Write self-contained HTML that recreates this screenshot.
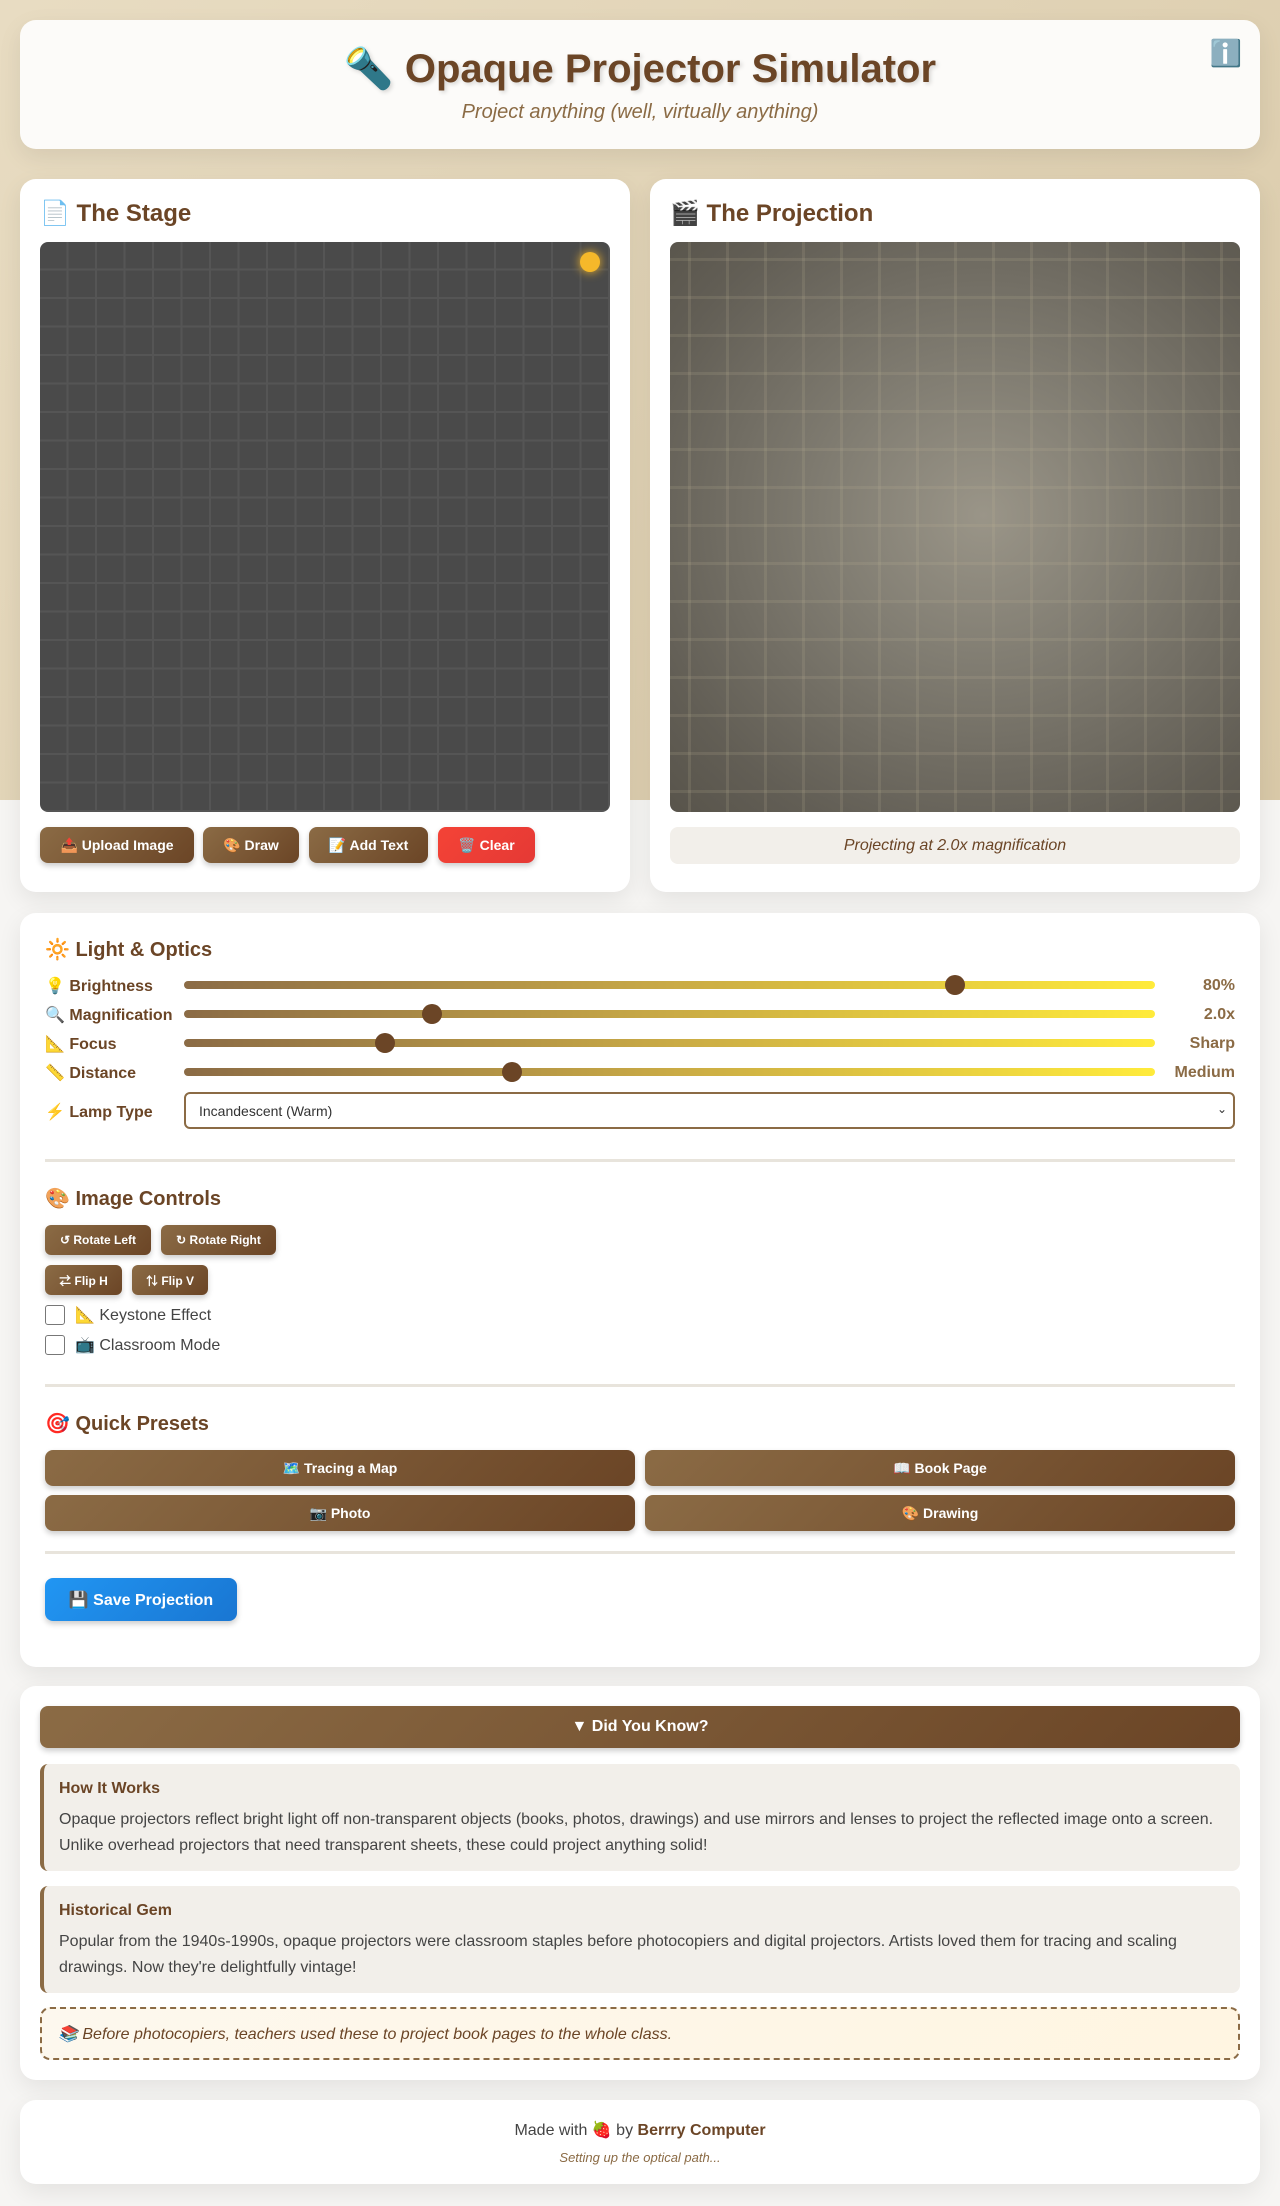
<!DOCTYPE html>
<html><head><meta charset="utf-8">
<style>
*{box-sizing:border-box;margin:0;padding:0}
html{background:#f6f5f3}
body{width:1280px;height:2206px;font-family:"Liberation Sans","Noto Sans CJK SC",sans-serif;color:#333;position:relative;
background:linear-gradient(135deg,#e8dcc2 0%,#d9c9a8 100%) no-repeat;background-size:1280px 800px;}
.card{position:absolute;background:#fff;border-radius:16px;box-shadow:0 8px 24px rgba(0,0,0,.08)}
.hdr{left:20px;top:20px;width:1240px;height:129px;background:#fcfbf9;text-align:center}
.hdr h1{position:absolute;left:0;right:0;top:25px;font-size:40px;color:#6b4526;text-shadow:2px 2px 4px rgba(0,0,0,.15)}
.hdr p{position:absolute;left:0;right:0;top:81px;font-size:20px;font-style:italic;color:#8b6b45}
.info{position:absolute;right:18px;top:18px;font-size:26px}
h2{font-size:24px;color:#6b4526;font-weight:bold}
h3{font-size:20px;color:#6b4526;font-weight:bold}
.stage{position:absolute;left:20px;top:63px;border-radius:8px;width:570px;height:570px;background-color:#4a4a4a;
background-image:linear-gradient(to right,transparent 26.5px,#555 26.5px,#555 28.5px),linear-gradient(to bottom,transparent 26.5px,#555 26.5px,#555 28.5px);background-size:28.5px 28.5px}
.proj{position:absolute;left:20px;top:63px;border-radius:8px;width:570px;height:570px;overflow:hidden;
background:radial-gradient(ellipse at 55% 48%,#9a9588 0%,#817d72 35%,#625e55 80%,#58544b 100%)}
.proj:after{content:"";position:absolute;inset:0;background-image:linear-gradient(to right,transparent 18px,rgba(190,180,150,.16) 18px,rgba(190,180,150,.16) 21px,transparent 21px),linear-gradient(to bottom,transparent 16px,rgba(190,180,150,.16) 16px,rgba(190,180,150,.16) 19px,transparent 19px);background-size:38px 38px}
.btn{position:absolute;height:36px;border-radius:8px;background:linear-gradient(135deg,#8b6b45,#6b4526);color:#fff;font-weight:bold;font-size:14px;display:flex;align-items:center;justify-content:center;box-shadow:0 3px 6px rgba(0,0,0,.2)}
.sm{height:30px;font-size:12px;border-radius:6px}
.row{position:absolute;left:45px;width:1190px;height:24px}
.row .l{position:absolute;left:0;top:3px;font-size:16px;font-weight:bold;color:#6b4526}
.row .t{position:absolute;left:139px;width:971px;top:8px;height:8px;border-radius:4px;background:linear-gradient(to right,#8b6b45,#c9aa45 50%,#ffeb3b)}
.row .k{position:absolute;top:2px;width:20px;height:20px;border-radius:50%;background:#6b4526;margin-left:-10px}
.row .v{position:absolute;right:0;top:4px;font-size:16px;font-weight:bold;color:#8b6b45}
.div{position:absolute;left:45px;width:1190px;height:3px;background:#e8e4dc}
.cb{position:absolute;left:45px;font-size:16px;color:#444;display:flex;align-items:center}
.cb i{display:inline-block;width:20px;height:20px;border:1.5px solid #777;border-radius:3px;margin-right:10px}
.fact{position:absolute;left:40px;width:1200px;background:#f2efea;border-left:4px solid #8b6b45;border-radius:8px;padding:16px 15px}
.fact b{display:block;color:#6b4526;font-size:16px;margin-bottom:9px}
.fact p{font-size:16px;line-height:26px;color:#444}
</style></head><body>
<div class="card hdr"><h1>🔦 Opaque Projector Simulator</h1><p>Project anything (well, virtually anything)</p><div class="info">ℹ️</div></div>

<div class="card" style="left:20px;top:179px;width:610px;height:713px">
<h2 style="position:absolute;left:20px;top:20px">📄 The Stage</h2>
<div class="stage"><div style="position:absolute;right:10px;top:10px;width:20px;height:20px;border-radius:50%;background:#f5b82a;box-shadow:0 0 10px #f5b82a"></div></div>
<div class="btn" style="left:20px;top:648px;width:154px">📤 Upload Image</div>
<div class="btn" style="left:183px;top:648px;width:96px">🎨 Draw</div>
<div class="btn" style="left:289px;top:648px;width:119px">📝 Add Text</div>
<div class="btn" style="left:418px;top:648px;width:97px;background:linear-gradient(135deg,#f44336,#e53935)">🗑️ Clear</div>
</div>

<div class="card" style="left:650px;top:179px;width:610px;height:713px">
<h2 style="position:absolute;left:20px;top:20px">🎬 The Projection</h2>
<div class="proj"></div>
<div style="position:absolute;left:20px;top:648px;width:570px;height:37px;background:#f2efea;border-radius:8px;text-align:center;line-height:37px;font-style:italic;font-size:16px;color:#6b4526">Projecting at 2.0x magnification</div>
</div>

<div class="card" style="left:20px;top:913px;width:1240px;height:754px"></div>
<h3 style="position:absolute;left:45px;top:937px">🔆 Light &amp; Optics</h3>
<div class="row" style="top:973px"><span class="l">💡 Brightness</span><div class="t"></div><div class="k" style="left:910px"></div><span class="v">80%</span></div>
<div class="row" style="top:1002px"><span class="l">🔍 Magnification</span><div class="t"></div><div class="k" style="left:387px"></div><span class="v">2.0x</span></div>
<div class="row" style="top:1031px"><span class="l">📐 Focus</span><div class="t"></div><div class="k" style="left:340px"></div><span class="v">Sharp</span></div>
<div class="row" style="top:1060px"><span class="l">📏 Distance</span><div class="t"></div><div class="k" style="left:467px"></div><span class="v">Medium</span></div>
<div class="row" style="top:1099px"><span class="l">⚡ Lamp Type</span></div>
<div style="position:absolute;left:184px;top:1092px;width:1051px;height:37px;border:2px solid #8b6b45;border-radius:6px;font-size:14px;color:#333;padding:9px 13px">Incandescent (Warm)<span style="position:absolute;right:6px;top:8px;font-size:12px">⌄</span></div>
<div class="div" style="top:1159px"></div>
<h3 style="position:absolute;left:45px;top:1186px">🎨 Image Controls</h3>
<div class="btn sm" style="left:45px;top:1225px;width:106px">↺ Rotate Left</div>
<div class="btn sm" style="left:161px;top:1225px;width:115px">↻ Rotate Right</div>
<div class="btn sm" style="left:45px;top:1265px;width:77px">⇄ Flip H</div>
<div class="btn sm" style="left:132px;top:1265px;width:76px">⇅ Flip V</div>
<div class="cb" style="top:1305px"><i></i>📐 Keystone Effect</div>
<div class="cb" style="top:1335px"><i></i>📺 Classroom Mode</div>
<div class="div" style="top:1384px"></div>
<h3 style="position:absolute;left:45px;top:1411px">🎯 Quick Presets</h3>
<div class="btn" style="left:45px;top:1450px;width:590px">🗺️ Tracing a Map</div>
<div class="btn" style="left:645px;top:1450px;width:590px">📖 Book Page</div>
<div class="btn" style="left:45px;top:1495px;width:590px">📷 Photo</div>
<div class="btn" style="left:645px;top:1495px;width:590px">🎨 Drawing</div>
<div class="div" style="top:1551px"></div>
<div class="btn" style="left:45px;top:1578px;width:192px;height:43px;font-size:16px;background:linear-gradient(135deg,#2196f3,#1976d2)">💾 Save Projection</div>

<div class="card" style="left:20px;top:1686px;width:1240px;height:394px"></div>
<div class="btn" style="left:40px;top:1706px;width:1200px;height:42px;font-size:16px">▼ Did You Know?</div>
<div class="fact" style="top:1764px;height:107px"><b>How It Works</b><p>Opaque projectors reflect bright light off non-transparent objects (books, photos, drawings) and use mirrors and lenses to project the reflected image onto a screen. Unlike overhead projectors that need transparent sheets, these could project anything solid!</p></div>
<div class="fact" style="top:1886px;height:107px"><b>Historical Gem</b><p>Popular from the 1940s-1990s, opaque projectors were classroom staples before photocopiers and digital projectors. Artists loved them for tracing and scaling drawings. Now they're delightfully vintage!</p></div>
<div style="position:absolute;left:40px;top:2007px;width:1200px;height:53px;border:2px dashed #8b6b45;border-radius:10px;background:linear-gradient(135deg,#fdf8ee,#fff5e1);font-style:italic;font-size:16px;color:#6b4526;padding:15px 16px">📚 Before photocopiers, teachers used these to project book pages to the whole class.</div>

<div class="card" style="left:20px;top:2100px;width:1240px;height:84px;text-align:center">
<div style="margin-top:20px;font-size:16px;color:#444">Made with 🍓 by <b style="color:#6b4526">Berrry Computer</b></div>
<div style="margin-top:10px;font-size:13px;font-style:italic;color:#8b6b45">Setting up the optical path...</div>
</div>
</body></html>
